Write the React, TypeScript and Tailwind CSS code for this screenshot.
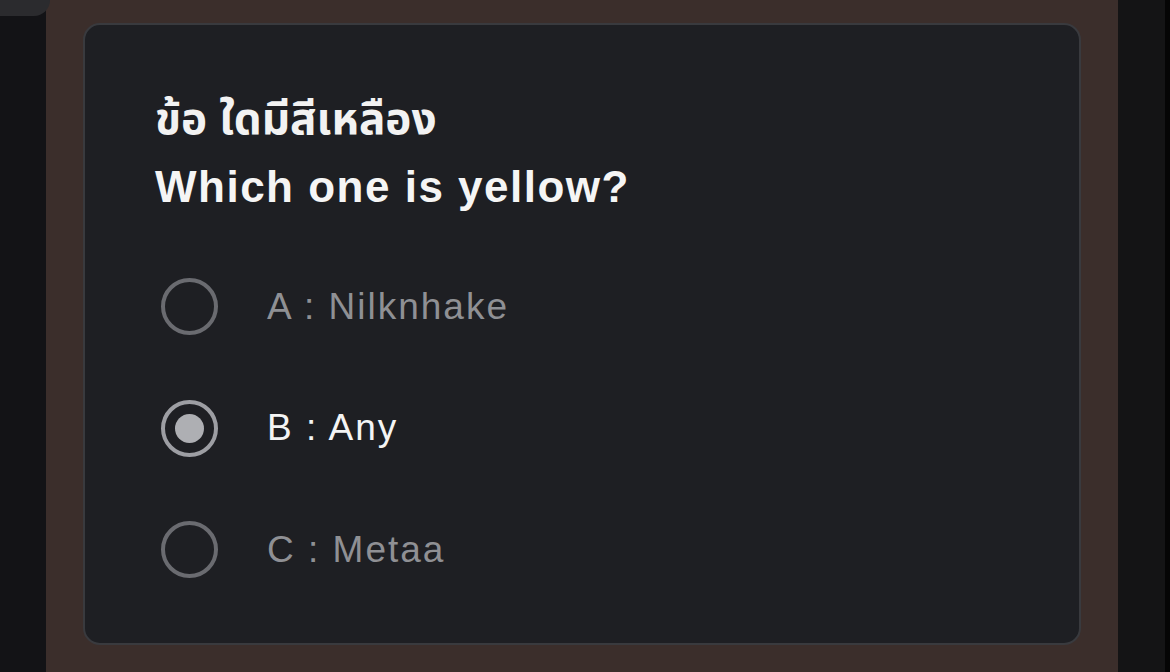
import React from "react";

const options = [
  { key: "A", label: "Nilknhake", selected: false },
  { key: "B", label: "Any", selected: true },
  { key: "C", label: "Metaa", selected: false },
];

function Radio({ selected }: { selected: boolean }) {
  return (
    <div
      className={
        "w-[57px] h-[57px] rounded-full border-[4px] flex items-center justify-center shrink-0 " +
        (selected ? "border-[#9d9ea3]" : "border-[#6a6b70]")
      }
    >
      {selected && <div className="w-[29px] h-[29px] rounded-full bg-[#aeafb3]" />}
    </div>
  );
}

export default function App() {
  return (
    <div
      className="relative w-[1170px] h-[672px] flex overflow-hidden"
      style={{ fontFamily: '"Liberation Sans", Arial, "Noto Sans", "Noto Sans Thai", sans-serif' }}
    >
      <div className="w-[46px] h-full bg-[#131316]" />
      <div className="absolute left-0 top-0 w-[50px] h-[16px] bg-[#2b2b2e] rounded-br-[16px]" />
      <div className="w-[1072px] h-full bg-[#3b2e2b] pl-[37px] pr-[37px] pt-[23px] pb-[27px]">
        <div className="w-full h-full rounded-[17px] border-[2px] border-[#393a3e] bg-[#1e1f23] pl-[70px] pt-[68px]">
          <div className="text-[44px] leading-[52px] font-bold text-[#f2f2f2]">ข้อ ใดมีสีเหลือง</div>
          <div className="mt-[18px] text-[44px] leading-[48px] font-bold text-[#f5f5f5] tracking-[1.5px]">
            Which one is yellow?
          </div>
          <div className="mt-[67px] flex flex-col gap-[64.5px] pl-[6px]">
            {options.map((o) => (
              <div key={o.key} className="flex items-center h-[57px]">
                <Radio selected={o.selected} />
                <div
                  className={
                    "ml-[49px] text-[37px] leading-[40px] tracking-[2px] " +
                    (o.selected ? "text-[#f4f4f4]" : "text-[#8f9094]")
                  }
                >
                  {o.key} : {o.label}
                </div>
              </div>
            ))}
          </div>
        </div>
      </div>
      <div className="w-[47px] h-full bg-[#141415]" />
      <div className="w-[5px] h-full bg-[#050505]" />
    </div>
  );
}
